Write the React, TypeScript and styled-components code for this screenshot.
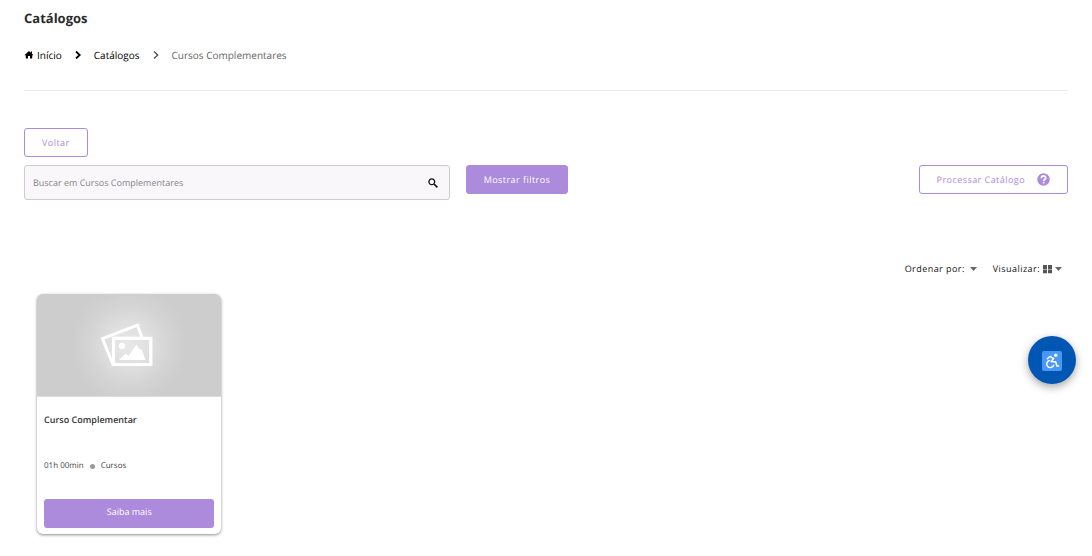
import React from 'react';
import styled, { createGlobalStyle } from 'styled-components';

const purple = '#ac8bdd';

const GlobalStyle = createGlobalStyle`
  *, *::before, *::after { box-sizing: border-box; }
  body {
    margin: 0;
    background: #fff;
    color: #333;
    font-family: 'Open Sans', 'Noto Sans', sans-serif;
    font-size: 9px;
    text-rendering: geometricPrecision;
  }
  button, input { font: inherit; text-rendering: inherit; }
`;

const Page = styled.main`
  padding: 8px 24px 20px;
`;

const Title = styled.h1`
  margin: 0;
  font-size: 13px;
  line-height: 20px;
  font-weight: 700;
  color: #2b2b2b;
`;

const Breadcrumb = styled.nav`
  margin-top: 17px;
  padding-bottom: 25px;
  border-bottom: 1px solid #ebebeb;

  ol {
    display: flex;
    align-items: center;
    margin: 0;
    padding: 0;
    list-style: none;
    font-size: 10px;
    line-height: 20px;
  }
  li {
    display: flex;
    align-items: center;
    color: #666;
  }
  svg { display: block; }
`;

const Crumb = styled.a`
  display: flex;
  align-items: center;
  gap: 3px;
  color: #000;
  text-decoration: none;
`;

const Separator = styled.svg<{ $muted?: boolean }>`
  width: 6px;
  height: 8px;
  margin: 0 13px;
  fill: none;
  stroke: ${({ $muted }) => ($muted ? '#555' : '#000')};
  stroke-width: ${({ $muted }) => ($muted ? 1.4 : 1.8)};
`;

const Button = styled.button<{ $filled?: boolean }>`
  display: inline-flex;
  align-items: center;
  justify-content: center;
  gap: 12px;
  height: 29px;
  padding: 0 17px;
  border: 1px solid ${purple};
  border-radius: 3px;
  background: ${({ $filled }) => ($filled ? purple : '#fff')};
  color: ${({ $filled }) => ($filled ? '#fff' : purple)};
  font-size: 9px;
  line-height: 16px;
  font-weight: 500;
  letter-spacing: 0.05em;
  white-space: nowrap;
  cursor: pointer;
`;

const BackRow = styled.div`
  display: flex;
  margin-top: 37px;
`;

const Toolbar = styled.div`
  display: grid;
  grid-template-columns: repeat(12, 1fr);
  column-gap: 16px;
  align-items: start;
  margin-top: 8px;
`;

const SearchBox = styled.form`
  grid-column: span 5;
  display: flex;
  align-items: center;
  height: 35px;
  padding: 0 11px 0 8px;
  border: 1px solid #ccc;
  border-radius: 3px;
  background: #f9f7f9;
`;

const SearchInput = styled.input`
  flex: 1;
  min-width: 0;
  padding: 0;
  border: 0;
  outline: 0;
  background: transparent;
  color: #333;
  font-size: 9px;
  line-height: 16px;
  &::placeholder { color: #858585; opacity: 1; }
`;

const IconButton = styled.button`
  display: flex;
  padding: 0;
  border: 0;
  background: none;
  color: #111;
  cursor: pointer;
`;

const ToolbarActions = styled.div`
  grid-column: span 7;
  display: flex;
  justify-content: space-between;
`;

const ViewOptions = styled.div`
  display: flex;
  justify-content: flex-end;
  gap: 16px;
  margin-top: 61px;
  padding-right: 6px;
`;

const OptionButton = styled.button<{ $gap: number }>`
  display: flex;
  align-items: center;
  padding: 0;
  border: 0;
  background: none;
  color: #111;
  font-size: 9px;
  line-height: 16px;
  font-weight: 500;
  letter-spacing: 0.05em;
  cursor: pointer;
  gap: ${({ $gap }) => $gap}px;
`;

const Cards = styled.section`
  display: grid;
  grid-template-columns: repeat(5, 1fr);
  gap: 24px;
  margin-top: 17px;
  padding: 0 13px;
`;

const Card = styled.article`
  overflow: hidden;
  border-radius: 6px;
  background: #fff;
  box-shadow: 0 1px 3px rgba(0, 0, 0, 0.45);
`;

const Cover = styled.div`
  display: flex;
  align-items: center;
  justify-content: center;
  height: 103px;
  padding-right: 4px;
  background: radial-gradient(circle at 50% 50%, #e8e8e8 0, #e0e0e0 20px, #d4d4d4 40px, #cdcdcd 58px);
  border-bottom: 1px solid #ddd;
`;

const CardBody = styled.div`
  padding: 15px 7px 6px;
`;

const CardTitle = styled.h2`
  margin: 0;
  font-size: 9px;
  line-height: 16px;
  font-weight: 600;
  color: #333;
`;

const Meta = styled.p`
  display: flex;
  align-items: center;
  gap: 6px;
  margin: 30px 0 25px;
  font-size: 8px;
  line-height: 16px;
  color: #444;
`;

const Dot = styled.span`
  width: 5px;
  height: 5px;
  border-radius: 50%;
  background: #999;
`;

const CardLink = styled.a`
  display: block;
  height: 29px;
  padding-top: 5px;
  border-radius: 3px;
  background: ${purple};
  color: #fff;
  font-size: 9px;
  line-height: 16px;
  font-weight: 500;
  text-align: center;
  text-decoration: none;
`;

const AccessButton = styled.button`
  position: fixed;
  top: 336px;
  right: 16px;
  display: flex;
  align-items: center;
  justify-content: center;
  width: 48px;
  height: 48px;
  padding: 1px 0 0;
  border: 0;
  border-radius: 50%;
  background: #0056b3;
  box-shadow: 0 3px 8px rgba(0, 0, 0, 0.35);
  cursor: pointer;
`;

const Caret = () => (
  <svg width="7" height="4" viewBox="0 0 7 4" aria-hidden="true">
    <path d="M0 0h7L3.5 4z" fill="#666" />
  </svg>
);

const Chevron = ({ muted }: { muted?: boolean }) => (
  <Separator $muted={muted} viewBox="0 0 6 8" aria-hidden="true">
    <path d="M1 .5 4.7 4 1 7.5" />
  </Separator>
);

export default function App() {
  return (
    <>
      <GlobalStyle />
      <Page>
        <Title>Catálogos</Title>
        <Breadcrumb aria-label="Navegação">
          <ol>
            <li>
              <Crumb href="#inicio">
                <svg width="10" height="8" viewBox="0 0 10 8" aria-hidden="true">
                  <path d="M5 0 .4 4.2h1.4V7.500H4V5h2v2.500h2.200V4.200h1.400L8 2.700V.6H6.900v1.100z" fill="#000" />
                </svg>
                Início
              </Crumb>
              <Chevron />
            </li>
            <li>
              <Crumb href="#catalogos">Catálogos</Crumb>
              <Chevron muted />
            </li>
            <li aria-current="page">Cursos Complementares</li>
          </ol>
        </Breadcrumb>

        <BackRow>
          <Button type="button">Voltar</Button>
        </BackRow>

        <Toolbar>
          <SearchBox role="search" onSubmit={(e) => e.preventDefault()}>
            <SearchInput
              type="text"
              aria-label="Buscar em Cursos Complementares"
              placeholder="Buscar em Cursos Complementares"
            />
            <IconButton type="submit" aria-label="Buscar">
              <svg width="10" height="10" viewBox="0 0 10 10" fill="none" stroke="currentColor" aria-hidden="true">
                <circle cx="3.8" cy="3.8" r="2.9" strokeWidth="1.3" />
                <path d="m6 6 3.4 3.4" strokeWidth="1.6" />
              </svg>
            </IconButton>
          </SearchBox>
          <ToolbarActions>
            <Button type="button" $filled>Mostrar filtros</Button>
            <Button type="button">
              Processar Catálogo
              <svg width="13" height="13" viewBox="0 0 13 13" fill="none" aria-hidden="true">
                <circle cx="6.5" cy="6.5" r="6.2" fill={purple} />
                <path d="M4.4 5.2c0-3 4.300-2.900 4.300-.2 0 1.600-2.100 1.400-2.100 3" stroke="#fff" strokeWidth="1.7" />
                <path d="M5.7 8.800h1.800v1.600H5.7z" fill="#fff" />
              </svg>
            </Button>
          </ToolbarActions>
        </Toolbar>

        <ViewOptions>
          <OptionButton type="button" $gap={5}>
            Ordenar por:
            <Caret />
          </OptionButton>
          <OptionButton type="button" $gap={3}>
            Visualizar:
            <svg width="9" height="10" viewBox="0 0 9 10" fill="#555" aria-hidden="true">
              <path d="M0 1h4v4H0zM5 1h4v4H5zM0 5.600h4v3.600H0zM5 5.600h4v3.600H5z" />
            </svg>
            <Caret />
          </OptionButton>
        </ViewOptions>

        <Cards>
          <Card>
            <Cover>
              <svg width="54" height="44" viewBox="0 0 54 44" fill="none" aria-hidden="true">
                <path d="M13 41.5 2.5 15.5 37.5 2.2l4.3 12" stroke="#fff" strokeWidth="3" />
                <path d="m12.5 35 0-19.5 4-2" stroke="#fff" strokeWidth="1" />
                <path d="M13.5 15.3h37.3v26.2H13.5z" stroke="#fff" strokeWidth="3.2" />
                <circle cx="22" cy="23" r="3.2" fill="#fff" />
                <path d="m19 37 6.5-6.5 3 2.5 8-11.5 3.5 5.5 1.5-1 4 11z" fill="#fff" />
              </svg>
            </Cover>
            <CardBody>
              <CardTitle>Curso Complementar</CardTitle>
              <Meta>
                <span>01h 00min</span>
                <Dot />
                <span>Cursos</span>
              </Meta>
              <CardLink href="#curso">Saiba mais</CardLink>
            </CardBody>
          </Card>
        </Cards>
      </Page>

      <AccessButton type="button" aria-label="Acessibilidade">
        <svg width="20" height="20" viewBox="0 0 20 20" fill="none" aria-hidden="true">
          <rect width="20" height="20" rx="2" fill="#4a98f5" />
          <circle cx="13.8" cy="4.3" r="1.7" fill="#fff" />
          <path
            d="M5.3 7.8 8 5.5l3.600 1.800-2.400 3.400h4.400l1.300 4.300h1.600M7.500 9.500a3.600 3.600 0 1 0 4.200 4.800"
            stroke="#fff"
            strokeWidth="1.5"
            strokeLinecap="round"
            strokeLinejoin="round"
          />
        </svg>
      </AccessButton>
    </>
  );
}
